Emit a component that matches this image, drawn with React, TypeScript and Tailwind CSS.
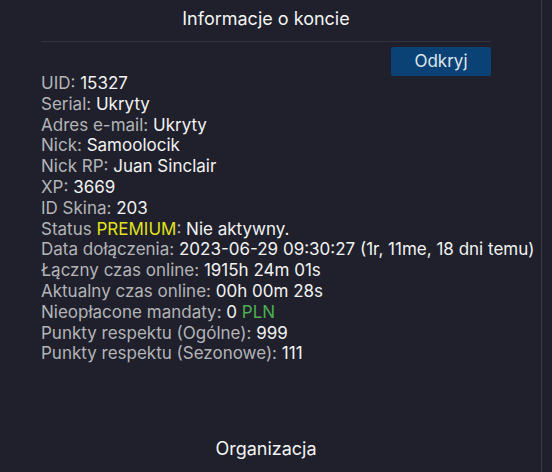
const rows: { label: React.ReactNode; value: React.ReactNode }[] = [
  { label: 'UID:', value: '15327' },
  { label: 'Serial:', value: 'Ukryty' },
  { label: 'Adres e-mail:', value: 'Ukryty' },
  { label: 'Nick:', value: 'Samoolocik' },
  { label: 'Nick RP:', value: 'Juan Sinclair' },
  { label: 'XP:', value: '3669' },
  { label: 'ID Skina:', value: '203' },
  {
    label: (
      <>
        Status <span className="text-[#e2e21a]">PREMIUM</span>:
      </>
    ),
    value: 'Nie aktywny.',
  },
  { label: 'Data dołączenia:', value: '2023-06-29 09:30:27 (1r, 11me, 18 dni temu)' },
  { label: 'Łączny czas online:', value: '1915h 24m 01s' },
  { label: 'Aktualny czas online:', value: '00h 00m 28s' },
  {
    label: 'Nieopłacone mandaty:',
    value: (
      <>
        0 <span className="text-[#4caf50]">PLN</span>
      </>
    ),
  },
  { label: 'Punkty respektu (Ogólne):', value: '999' },
  { label: 'Punkty respektu (Sezonowe):', value: '111' },
];

export default function App() {
  return (
    <div
      className="flex h-[472px] w-[552px] overflow-hidden bg-[#1f202b] text-white"
      style={{ fontFamily: 'Inter, "Noto Sans", sans-serif' }}
    >
      <div className="flex w-[532px] flex-col">
        <div className="px-[41px]">
          <h2 className="flex h-[41px] items-center justify-center pb-[4px] text-[18px] font-normal text-[#f4f4f4]">
            Informacje o koncie
          </h2>
          <div className="h-px bg-[#30323e]" />
          <div className="pt-[5px]">
            <button className="float-right h-[29px] w-[100px] rounded-[2px] bg-[#0b4275] text-[17px] font-normal text-[#dfe6ee]">
              Odkryj
            </button>
            <div className="pt-[26px] text-[17px] font-normal leading-[20.8px] whitespace-nowrap">
              {rows.map((r, i) => (
                <div key={i}>
                  <span className="text-[#b4b4b8]">{r.label}</span>{' '}
                  <span className="text-[#f2f2f2]">{r.value}</span>
                </div>
              ))}
            </div>
          </div>
        </div>
        <div className="mt-auto flex h-[43px] items-start justify-center pt-[6px] text-[18px] font-normal text-[#f4f4f4]">
          Organizacja
        </div>
      </div>
      <div className="ml-[9px] w-px bg-[#383b48]" />
    </div>
  );
}
